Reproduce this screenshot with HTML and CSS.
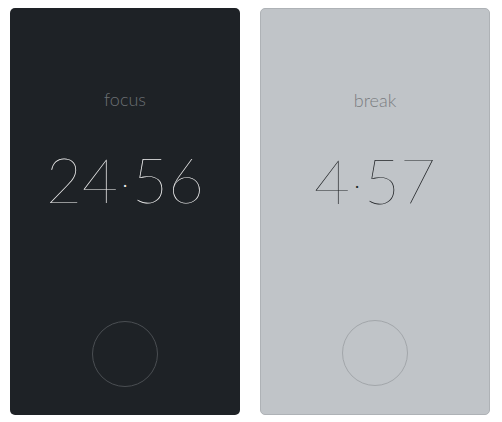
FILE: index.html
```html
<!DOCTYPE html>
<html>
<head>
<meta charset="utf-8">
<link rel="stylesheet" href="styles.css">
</head>
<body>
<div class="screens">
  <div class="card card-dark">
    <div class="label">focus</div>
    <div class="time">24<span class="sep">·</span>56</div>
    <div class="spacer"></div>
    <div class="button"></div>
  </div>
  <div class="card card-light">
    <div class="label">break</div>
    <div class="time">4<span class="sep">·</span>57</div>
    <div class="spacer"></div>
    <div class="button"></div>
  </div>
</div>
</body>
</html>
```

FILE: styles.css
```css
html, body {
  margin: 0;
  padding: 0;
  background: #ffffff;
}
body {
  padding: 8px 10px;
  font-family: "Lato", "Noto Sans", sans-serif;
}
.screens {
  display: flex;
  gap: 20px;
}
.card {
  width: 230px;
  height: 407px;
  box-sizing: border-box;
  border-radius: 5px;
  display: flex;
  flex-direction: column;
  align-items: center;
  padding-top: 79px;
  padding-bottom: 28px;
}
.card-dark {
  background: #1e2226;
}
.card-light {
  background: #c0c4c8;
  border: 1px solid #aeb2b6;
}
.label {
  font-size: 18px;
  font-weight: 300;
  line-height: 24px;
  color: #6c7074;
}
.card-light .label {
  color: #7a7d81;
}
.time {
  margin-top: 30px;
  font-size: 62px;
  font-weight: 200;
  line-height: 76px;
  color: #f2f2f2;
}
.card-light .time {
  color: #1c1f22;
}
.sep {
  font-size: 36px;
  vertical-align: 6px;
  margin: 0 3px;
}
.spacer {
  flex: 1;
}
.button {
  width: 66px;
  height: 66px;
  box-sizing: border-box;
  border-radius: 50%;
  border: 1px solid #4a4e52;
}
.card-light .button {
  border-color: #a2a6aa;
}
```
